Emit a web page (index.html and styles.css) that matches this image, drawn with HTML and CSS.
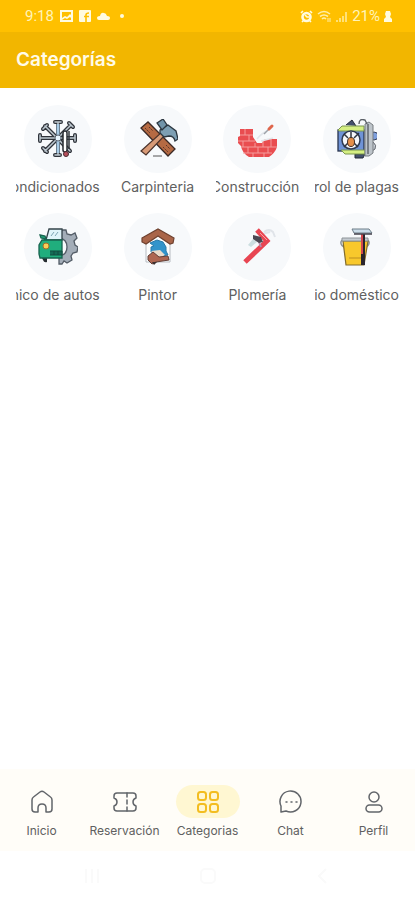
FILE: index.html
```html
<!DOCTYPE html>
<html lang="es">
<head>
    <meta charset="UTF-8">
    <title>Categorías</title>
    <meta name="viewport" content="width=device-width, initial-scale=1.0">
    <link rel="stylesheet" href="styles.css">
</head>
<body>
    <div class="status-bar">
        <div class="status-group">
            <span class="clock">9:18</span>
            <svg width="13" height="12" viewBox="0 0 13 12"><path fill="#fffbe0" fill-rule="evenodd" d="M0 0h13v12H0zM2 2v6l3-2 2 1 3-3 1 1V2zM2 10h9V8l-1-1-3 2-2-1z"/></svg>
            <svg width="12" height="12" viewBox="0 0 12 12"><rect width="12" height="12" rx="1" fill="#fffbe0"/><path d="M7 12V5q0-2 3-2M5 6.500h5" fill="none" stroke="#ffc000" stroke-width="1.600"/></svg>
            <svg class="cloud" width="13" height="12" viewBox="0 0 13 12"><path fill="#fffbe0" d="M2 10Q0 10 0 8t3-2q1-4 4-3 2 0 3 3 3 0 3 2 0 2-2 2z"/></svg>
            <span class="dot"></span>
        </div>
        <div class="status-group status-right">
            <svg width="13" height="13" viewBox="0 0 13 13"><circle cx="6.500" cy="7" r="4" fill="#ffc000" stroke="#fffbe0" stroke-width="2.600"/><path d="M1 3l2-2M10 1l2 2M2 12l2-2M11 12l-2-2M5 5l2 2h2" fill="none" stroke="#fffbe0" stroke-width="1.600"/></svg>
            <svg width="15" height="13" viewBox="0 0 15 13"><path d="M1 4q6-5 12 0M3 6.500q4-3 8 0M5 9q2-2 4 0" fill="none" stroke="#ffefaa" stroke-width="1.600"/><path d="M11 8v4M13 12V8" stroke="#ffefaa"/></svg>
            <svg width="12" height="13" viewBox="0 0 12 13"><path d="M1 12v-2M4 12V8M7 12V6M10 12V2" stroke="#ffe994" stroke-width="1.600"/></svg>
            <span class="battery">21%</span>
            <svg width="8" height="13" viewBox="0 0 8 13"><path fill="#fffbe0" d="M2 1h4l1 3-1 3 2 2v3H0V9l2-2-1-3z"/></svg>
        </div>
    </div>

    <header class="app-bar">
        <h1>Categorías</h1>
    </header>

    <main class="categories">
        <a class="category" href="#">
            <span class="bubble">
                <svg viewBox="0 0 40 40">
                    <g fill="none" stroke-linecap="round">
                        <path d="M20 3v33M2 19h35M7 7l25 25M33 6L7 32M17 3h6M2 16v6M37 16v6M5 10l4-4M5 29l4 4M31 4l4 4M17 36h5" stroke="#30343b" stroke-width="4"/>
                        <path d="M20 3v33M2 19h35M7 7l25 25M33 6L7 32M17 3h6M2 16v6M37 16v6M5 10l4-4M5 29l4 4M31 4l4 4M17 36h5" stroke="#bdc8d0" stroke-width="1.5"/>
                    </g>
                    <path d="M20 5v29" stroke="#a8cbe5" stroke-width="3"/>
                    <circle cx="20" cy="19" r="3" fill="#e9f6ff" stroke="#5a6470"/>
                    <rect x="25" y="12" width="4" height="21" rx="2" fill="#fff" stroke="#282b31" stroke-width="1.5"/>
                    <path d="M31 12v18" stroke="#30343b" stroke-width="1.5"/>
                    <circle cx="28" cy="35" r="2.5" fill="#b9505c" stroke="#4a2c32"/>
                </svg>
            </span>
            <span class="label"><span>Aires acondicionados</span></span>
        </a>
        <a class="category" href="#">
            <span class="bubble">
                <svg viewBox="0 0 40 40">
                    <path d="M3 9l7-6 27 27-7 7z" fill="#b56a43" stroke="#3a2925" stroke-width="1.3"/>
                    <path d="M7 9l5 5M11 8l4 4M25 28l5 5M28 26l4 4" stroke="#5c3528" stroke-dasharray="2 1"/>
                    <path d="M25 12l3 3L8 36l-5-4z" fill="#d89a76" stroke="#4a332c" stroke-width="1.2"/>
                    <path d="M22 11l8-5 8 6 2 8-3 2q-1-5-6-5l-5 1-4-4z" fill="#7d9fb3" stroke="#2c3740" stroke-width="1.3"/>
                    <path d="M19 4l6-4 4 6-5 5z" fill="#7194a9" stroke="#2c3740" stroke-width="1.3"/>
                    <path d="M15 37h9" stroke="#555"/>
                </svg>
            </span>
            <span class="label"><span>Carpinteria</span></span>
        </a>
        <a class="category" href="#">
            <span class="bubble">
                <svg viewBox="0 0 40 40">
                    <path d="M3 10h13v8l4 6h5l3-4h12v8q-2 6-8 10H12Q5 34 4 27l-3-3v-6l2-1z" fill="#e94d50"/>
                    <path d="M3 16h13M1 22h17M4 28h36M6 34h29M8 10v6M12 16v6M6 22v6M18 24v4M11 28v6M21 28v6M31 28v6M26 22v6M34 20v8M16 34v4M27 34v4" stroke="#f59c9b"/>
                    <path d="M20 20q5-6 10-8M24 22l12-3" fill="none" stroke="#e2e6eb" stroke-width="1.5"/>
                    <path d="M27 15l5-5" stroke="#9ca1a8" stroke-width="1.5"/>
                    <path d="M32 10l3-3" stroke="#df664c" stroke-width="3" stroke-linecap="round"/>
                </svg>
            </span>
            <span class="label"><span>Construcción</span></span>
        </a>
        <a class="category" href="#">
            <span class="bubble">
                <svg viewBox="0 0 40 40">
                    <path d="M9 6l6-5 4 6M18 35v4h8l2-4z" fill="#43506c" stroke="#252b38"/>
                    <rect x="1" y="11" width="26" height="21" fill="#6f93d6" stroke="#27334d" stroke-width="1.3"/>
                    <path d="M1 11l4-4h22v5H2zM4 31h24v4H8z" fill="#d5ef83" stroke="#7a9550"/>
                    <circle cx="14" cy="21" r="9" fill="#f5f7fb" stroke="#303b50" stroke-width="1.5"/>
                    <path d="M7 15l4 4M22 14l-5 5M7 28l4-4M21 28l-4-4M14 13v6" stroke="#2f3540" stroke-width="1.5"/>
                    <ellipse cx="14" cy="23" rx="3.5" ry="4.5" fill="#e58f49" stroke="#443128"/>
                    <circle cx="37" cy="17" r="4" fill="#7d9edc" stroke="#39425a"/>
                    <path d="M36 23q4 3 2 7l-3 2" fill="#cfd5dc" stroke="#5c6168"/>
                    <path d="M28 5l4-2 4 3v28l-4 3h-4z" fill="#bdc4ca" stroke="#777c81"/>
                    <path d="M31 5v30M22 5q0-6 6-4l2 4" fill="none" stroke="#5c6168" stroke-width="1.4"/>
                </svg>
            </span>
            <span class="label"><span>Control de plagas</span></span>
        </a>
        <a class="category" href="#">
            <span class="bubble">
                <svg viewBox="0 0 40 40">
                    <path d="M24 3h4l1 4 4 1 4-2 2 5-3 3 1 4 3 2-1 5-4 1-2 3 1 4-5 3-3-2-2 3h-3v-8q8-1 8-9t-8-9z" fill="#a3adb8" stroke="#535c66" stroke-width="1.3"/>
                    <path d="M8 13l3-11h13v11z" fill="#dff4fa" stroke="#34434a" stroke-width="1.3"/>
                    <path d="M13 9l3-4M17 9l3-4" stroke="#7da6b5"/>
                    <path d="M4 31h5v4q-3 1-4-2z" fill="#252c30"/>
                    <path d="M4 13h20v18H2l-1-4v-9zM2 8l5 1 1 3-5-1z" fill="#20ae7d" stroke="#17634f" stroke-width="1.3"/>
                    <path d="M12 24h12v4H12M16 24v4M20 24v4" fill="#146c56" stroke="#124d40"/>
                    <circle cx="8" cy="19" r="3" fill="#f8cf58" stroke="#a56d27"/>
                </svg>
            </span>
            <span class="label"><span>Mecánico de autos</span></span>
        </a>
        <a class="category" href="#">
            <span class="bubble">
                <svg viewBox="0 0 40 40">
                    <path d="M8 13l12-8 12 8v22H8z" fill="#fcfdfd" stroke="#b7bcc2"/>
                    <path d="M12 16l7-3 6 2 3 5v4l2 4-7 1-3-4h-7v-5l3-1z" fill="#3294cb" stroke="#287aaa"/>
                    <path d="M13 24l9-1 5 5-6 3z" fill="#eadbcb"/>
                    <path d="M10 29l5-4 6 5 9-1 1 4-13 2-4 2-4-4z" fill="#ae6651" stroke="#633e36"/>
                    <path d="M14 35h5l-3 3z" fill="#3d302f"/>
                    <path d="M4 11L20 2l16 9-1 5-3 1-12-8-12 8-4-2z" fill="#a96549" stroke="#6e412f" stroke-width="1.2"/>
                </svg>
            </span>
            <span class="label"><span>Pintor</span></span>
        </a>
        <a class="category" href="#">
            <span class="bubble">
                <svg viewBox="0 0 40 40">
                    <path d="M27 5q5-4 9 0l2 5M25 7l8-2" fill="none" stroke="#e0e4e9" stroke-width="2"/>
                    <path d="M11 18l5-6 4 3-6 5z" fill="#ccdee0"/>
                    <path d="M8 35l22-21L20 3" fill="none" stroke="#e84552" stroke-width="5"/>
                    <path d="M22 15l2 5" stroke="#b58aac" stroke-width="2"/>
                    <path d="M16 8l8 2 2 5-4 1-6-4z" fill="#4b4751"/>
                    <path d="M23 6l7 7" stroke="#faa0a2"/>
                </svg>
            </span>
            <span class="label"><span>Plomería</span></span>
        </a>
        <a class="category" href="#">
            <span class="bubble">
                <svg viewBox="0 0 40 40">
                    <path d="M5 13q-3 4 2 7M31 13q3 4-2 7" fill="none" stroke="#8d949b" stroke-width="1.5"/>
                    <path d="M6 14h25l-4 24H9z" fill="#f8c82c" stroke="#816c2e" stroke-width="1.2"/>
                    <path d="M5 11h26v3H5z" fill="#c4cbd0" stroke="#8d9498"/>
                    <path d="M12 31h15" stroke="#bd8e20"/>
                    <path d="M26 7v31" stroke="#2b252c" stroke-width="4"/>
                    <path d="M25 7v20" stroke="#d4474d" stroke-width="2"/>
                    <path d="M15 2h17l3 4H17z" fill="#cbdde9" stroke="#6d7c87"/>
                    <path d="M17 7h18" stroke="#44424c" stroke-width="1.5"/>
                </svg>
            </span>
            <span class="label"><span>Servicio doméstico</span></span>
        </a>
    </main>

    <nav class="tab-bar">
        <a class="tab" href="#">
            <span class="pill"><svg viewBox="0 0 24 24"><path d="M2 10q0-2 1.500-3L10 2q2-1.500 4 0l6.500 5Q22 8 22 10v9q0 3-3 3h-3v-4q0-4-4-4t-4 4v4H5q-3 0-3-3z"/></svg></span>
            Inicio
        </a>
        <a class="tab" href="#">
            <span class="pill"><svg viewBox="0 0 24 24"><path d="M4 3h16q3 0 3 3v2q-3 1-3 4t3 4v2q0 3-3 3H4q-3 0-3-3v-2q3-1 3-4T1 8V6q0-3 3-3z"/><path d="M14 3v4M14 10v4M14 17v4"/></svg></span>
            Reservación
        </a>
        <a class="tab active" href="#">
            <span class="pill"><svg viewBox="0 0 24 24"><rect x="2" y="2" width="8" height="8" rx="2.5"/><rect x="14" y="2" width="8" height="8" rx="2.5"/><rect x="2" y="14" width="8" height="8" rx="2.5"/><rect x="14" y="14" width="8" height="8" rx="2.5"/></svg></span>
            Categorias
        </a>
        <a class="tab" href="#">
            <span class="pill"><svg viewBox="0 0 24 24"><path d="M2 22v-6A10.500 10.500 0 1 1 7 21z"/><path d="M7 12h1M12 12h1M17 12h1"/></svg></span>
            Chat
        </a>
        <a class="tab" href="#">
            <span class="pill"><svg viewBox="0 0 24 24"><circle cx="12" cy="7" r="5"/><rect x="4" y="15" width="16" height="7" rx="3.5"/></svg></span>
            Perfil
        </a>
    </nav>

    <div class="system-nav">
        <svg viewBox="0 0 20 20"><path d="M4 3v14M10 3v14M16 3v14"/></svg>
        <svg viewBox="0 0 20 20"><rect x="3" y="3" width="14" height="14" rx="4"/></svg>
        <svg viewBox="0 0 20 20"><path d="M13 3l-7 7 7 7"/></svg>
    </div>
</body>
</html>
```

FILE: styles.css
```css
* {
    box-sizing: border-box;
}

body {
    margin: 0;
    min-height: 100vh;
    display: flex;
    flex-direction: column;
    background: #fff;
    color: #606060;
    font-family: Inter, "Liberation Sans", sans-serif;
}

a {
    color: inherit;
    text-decoration: none;
}

svg {
    display: block;
    flex: none;
}

.status-bar {
    height: 32px;
    padding: 0 23px 0 25px;
    display: flex;
    align-items: center;
    justify-content: space-between;
    background: #ffc000;
    color: #fff4b8;
    font-family: Roboto, sans-serif;
    font-size: 15px;
}

.status-group {
    display: flex;
    align-items: center;
    gap: 6px;
}

.status-right {
    gap: 4px;
}

.dot {
    width: 4px;
    height: 4px;
    margin-left: 4px;
    border-radius: 50%;
    background: #fffbe0;
}

.app-bar {
    height: 56px;
    padding: 0 16px;
    display: flex;
    align-items: center;
    background: #f2b600;
}

h1 {
    margin: 0;
    color: #fffbe8;
    font-size: 19px;
    font-weight: 600;
    line-height: 24px;
}

.categories {
    flex: 1;
    padding: 17px 16px;
    display: grid;
    grid-template-columns: repeat(4, minmax(0, 1fr));
    align-content: start;
    gap: 18px 16px;
}

.category {
    display: flex;
    flex-direction: column;
    align-items: center;
    gap: 6px;
}

.bubble {
    width: 68px;
    height: 68px;
    display: flex;
    align-items: center;
    justify-content: center;
    border-radius: 50%;
    background: #f7f9fb;
}

.bubble svg {
    width: 40px;
    height: 40px;
}

/* long names keep their end in view, short ones stay centred */
.label {
    width: 100%;
    display: flex;
    flex-direction: row-reverse;
    overflow: hidden;
    font-size: 14px;
    line-height: 16px;
    white-space: nowrap;
}

.label span {
    flex: none;
    margin: 0 auto;
}

.tab-bar {
    padding: 16px 0 12px;
    display: flex;
    background: #fffdf8;
}

.tab {
    flex: 1 1 0;
    min-width: 0;
    display: flex;
    flex-direction: column;
    align-items: center;
    gap: 5px;
    font-size: 12px;
    line-height: 16px;
}

.pill {
    width: 64px;
    height: 33px;
    display: flex;
    align-items: center;
    justify-content: center;
    border-radius: 17px;
}

.pill svg {
    width: 24px;
    height: 24px;
    fill: none;
    stroke: #62656a;
    stroke-width: 1.5;
    stroke-linecap: round;
    stroke-linejoin: round;
}

.active .pill {
    background: #fff7d2;
}

.active .pill svg {
    stroke: #f3bd20;
    stroke-width: 2;
}

.system-nav {
    height: 49px;
    padding: 0 82px;
    display: flex;
    align-items: center;
    justify-content: space-between;
}

.system-nav svg {
    width: 20px;
    height: 20px;
    fill: none;
    stroke: #fafafa;
    stroke-width: 2;
}
```
